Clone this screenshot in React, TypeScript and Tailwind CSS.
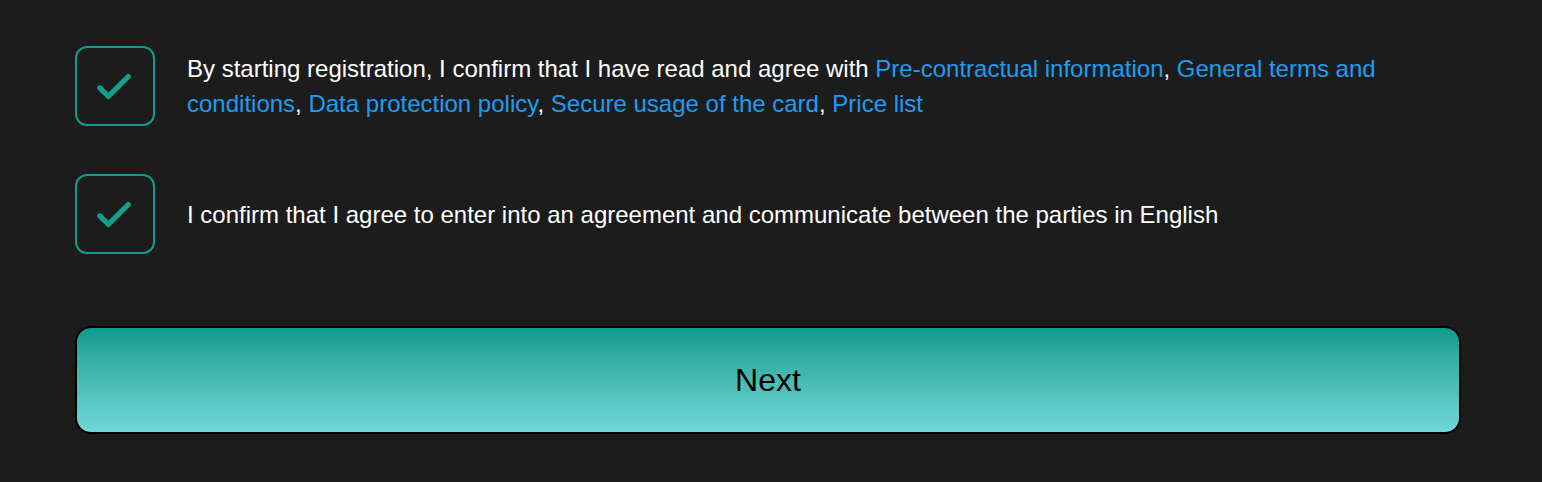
import React from "react";

function Check() {
  return (
    <div className="w-[80px] h-[80px] shrink-0 rounded-[12px] border-2 border-[#139a8c] flex items-center justify-center">
      <svg width="80" height="80" viewBox="0 0 80 80" fill="none">
        <path d="M24 42 L33 51 L54 30" stroke="#11a08f" strokeWidth="5.5" strokeLinecap="round" strokeLinejoin="round" />
      </svg>
    </div>
  );
}

const L = ({ children }: { children: React.ReactNode }) => (
  <a className="text-[#1e9cf2] cursor-pointer">{children}</a>
);

export default function App() {
  return (
    <div className="w-[1542px] h-[482px] bg-[#1c1c1c] pt-[46px] pl-[75px]" style={{ fontFamily: '"Liberation Sans", Arial, sans-serif' }}>
      <div className="w-[1386px] flex flex-col">
        <div className="flex items-center gap-[32px]">
          <Check />
          <p className="text-white text-[24px] leading-[35px] pr-[20px]">
            By starting registration, I confirm that I have read and agree with <L>Pre-contractual information</L>, <L>General terms and conditions</L>, <L>Data protection policy</L>, <L>Secure usage of the card</L>, <L>Price list</L>
          </p>
        </div>
        <div className="flex items-center gap-[32px] mt-[48px]">
          <Check />
          <p className="text-white text-[24px] leading-[35px]">
            I confirm that I agree to enter into an agreement and communicate between the parties in English
          </p>
        </div>
        <button className="mt-[72px] h-[108px] w-full rounded-[16px] border-2 border-black bg-gradient-to-b from-[#079c8d] to-[#70d8da] text-black text-[32px] flex items-center justify-center">
          Next
        </button>
      </div>
    </div>
  );
}
